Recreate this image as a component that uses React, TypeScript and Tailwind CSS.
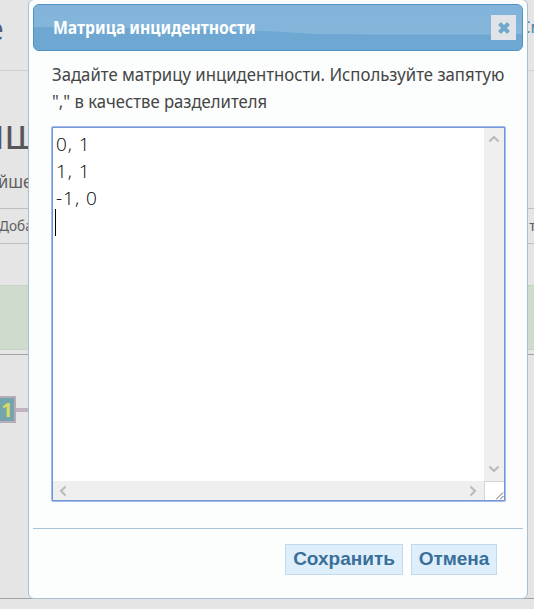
import { ReactNode } from "react";

const sans = "font-['Noto_Sans','Liberation_Sans',sans-serif]";
const open = "font-['Open_Sans','Noto_Sans',sans-serif]";
const arial = "font-['Liberation_Sans',sans-serif]";

function Line({ className, children }: { className: string; children: ReactNode }) {
  return (
    <div>
      <span className={`inline-block origin-left whitespace-pre ${className}`}>{children}</span>
    </div>
  );
}

function Chevron({ d }: { d: string }) {
  return (
    <svg width="12" height="12" viewBox="0 0 12 12" fill="none" stroke="#b9b9b9" strokeWidth="2">
      <path d={d} />
    </svg>
  );
}

function PageBehind() {
  return (
    <div className={`flex h-[609px] flex-col bg-[#e5e5e5] text-[#606060] ${sans}`}>
      <header className="flex h-[71px] shrink-0 justify-between border-b border-[#d0d0d0]">
        <span className="-ml-[13px] mt-[9px] text-[30px] leading-10 text-[#526171]">е</span>
        <span className="-mr-[9px] mt-[17px] text-[16px] font-medium leading-5 text-[#5788a8]">См</span>
      </header>
      <div className="h-[92px] shrink-0">
        <h1 className="-ml-[20px] pt-[34px] text-[42px] leading-[56px] text-[#58565a]">
          <Line className="scale-x-[.94]">иш</Line>
        </h1>
      </div>
      <p className="-ml-[2px] h-[45px] shrink-0 pt-[6px] text-[18px] leading-6">
        <Line className="scale-x-[.92]">йше</Line>
      </p>
      <nav className="flex h-9 shrink-0 items-center justify-between border-y border-[#bfbfbf] text-[14.5px]">
        <Line className="-ml-px scale-x-[.94]">Доба</Line>
        <span className="-mr-[2px]">т</span>
      </nav>
      <div className="mt-[41px] h-[65px] shrink-0 border-y border-[#c7d4c4] bg-[#cfdbcc]" />
      <section className="mt-1 h-[245px] shrink-0 border-y border-[#a3a3a3]">
        <div className="mt-[41px] flex items-center">
          <div className={`flex h-[27px] w-4 items-center justify-center border-2 border-l-0 border-[#b6acb9] bg-[#74a5ad] text-[20px] font-bold text-[#d8d86b] ${sans}`}>
            1
          </div>
          <div className="h-1 w-3 bg-[#c0b3bf]" />
        </div>
      </section>
    </div>
  );
}

function Dialog() {
  return (
    <div className="absolute left-[28px] -top-px flex h-[600px] w-[500px] flex-col rounded-[6px] border border-[#a6bfd3] bg-[#fcfdfd] px-1">
      <div className="relative mt-1 flex h-[47px] shrink-0 items-center justify-between overflow-hidden rounded-[6px] border border-[#5194c1] bg-[#6ea7d2] pl-[19px] pr-[6px]">
        <svg className="absolute inset-0" width="490" height="45" preserveAspectRatio="none" viewBox="0 0 490 45">
          <defs>
            <linearGradient id="gloss" x1="0" y1="0" x2="0" y2="1">
              <stop offset="0" stopColor="#82b3db" />
              <stop offset="1" stopColor="#84b6da" />
            </linearGradient>
          </defs>
          <path d="M0 0H490V29Q400 30 280 29Q210 24 150 24Q70 22 0 22Z" fill="url(#gloss)" />
        </svg>
        <h2 className={`relative text-[18px] font-bold text-white ${sans}`}>
          <Line className="scale-x-[.875]">Матрица инцидентности</Line>
        </h2>
        <button className="relative flex size-[25px] items-center justify-center bg-[#e0e4e8]" aria-label="Закрыть">
          <svg width="12" height="12" viewBox="0 0 12 12" stroke="#70a7cd" strokeWidth="4">
            <path d="M1.5 1.5L10.5 10.5M10.5 1.5L1.5 10.5" />
          </svg>
        </button>
      </div>
      <div className={`h-[75px] shrink-0 pl-[19px] pt-[10px] text-[18px] leading-[27px] text-[#454545] ${sans}`}>
        <Line className="scale-x-[.929]">Задайте матрицу инцидентности. Используйте запятую</Line>
        <Line className="scale-x-[.927]">"," в качестве разделителя</Line>
      </div>
      <div className="ml-[18px] flex h-[376px] w-[455px] shrink-0 flex-col rounded-[2px] border border-[#a3bbe8] bg-white">
        <div className="flex min-h-0 grow flex-col border border-[#7396d8]">
          <div className="flex h-[353px] shrink-0">
            <div className={`w-[431px] pl-[2px] pt-[3px] text-[19px] leading-[27px] text-black ${open}`}>
              <Line className="ml-px font-light tracking-[1px]">0, 1</Line>
              <Line className="ml-px font-light tracking-[1px]">1, 1</Line>
              <Line className="ml-px font-light tracking-[1px]">-1, 0</Line>
              <div className="-mt-[3px] h-[27px] w-px bg-black" />
            </div>
            <div className="flex w-5 flex-col items-center justify-between bg-[#efefef] pb-[6px] pt-[5px]">
              <Chevron d="M1.5 8.5L6 4L10.5 8.5" />
              <Chevron d="M1.5 3.5L6 8L10.5 3.5" />
            </div>
          </div>
          <div className="flex h-[19px]">
            <div className="flex w-[431px] items-center justify-between bg-[#efefef] pl-1 pr-[5px]">
              <Chevron d="M8.5 1.5L4 6L8.5 10.5" />
              <Chevron d="M3.5 1.5L8 6L3.5 10.5" />
            </div>
            <div className="flex w-5 items-end justify-end border-l border-t border-[#d5d5d5] bg-white">
              <svg width="8" height="8" viewBox="0 0 8 8" stroke="#666" strokeWidth="1">
                <path d="M0 7.5L7 .5M4 7.5L7.5 4" />
              </svg>
            </div>
          </div>
        </div>
      </div>
      <footer className={`mt-[26px] flex justify-end gap-2 border-t border-[#a6c3d8] pr-[26px] pt-[15px] text-[19px] font-bold text-[#396f98] ${arial}`}>
        <button className="flex h-[31px] w-[118px] items-center justify-center whitespace-nowrap border border-[#c1d9ea] bg-[#dfeefb]">
          Сохранить
        </button>
        <button className="flex h-[31px] w-[86px] items-center justify-center whitespace-nowrap border border-[#c1d9ea] bg-[#dfeefb]">
          Отмена
        </button>
      </footer>
    </div>
  );
}

export default function App() {
  return (
    <main className="relative h-[609px] w-[534px] overflow-hidden">
      <PageBehind />
      <Dialog />
    </main>
  );
}
